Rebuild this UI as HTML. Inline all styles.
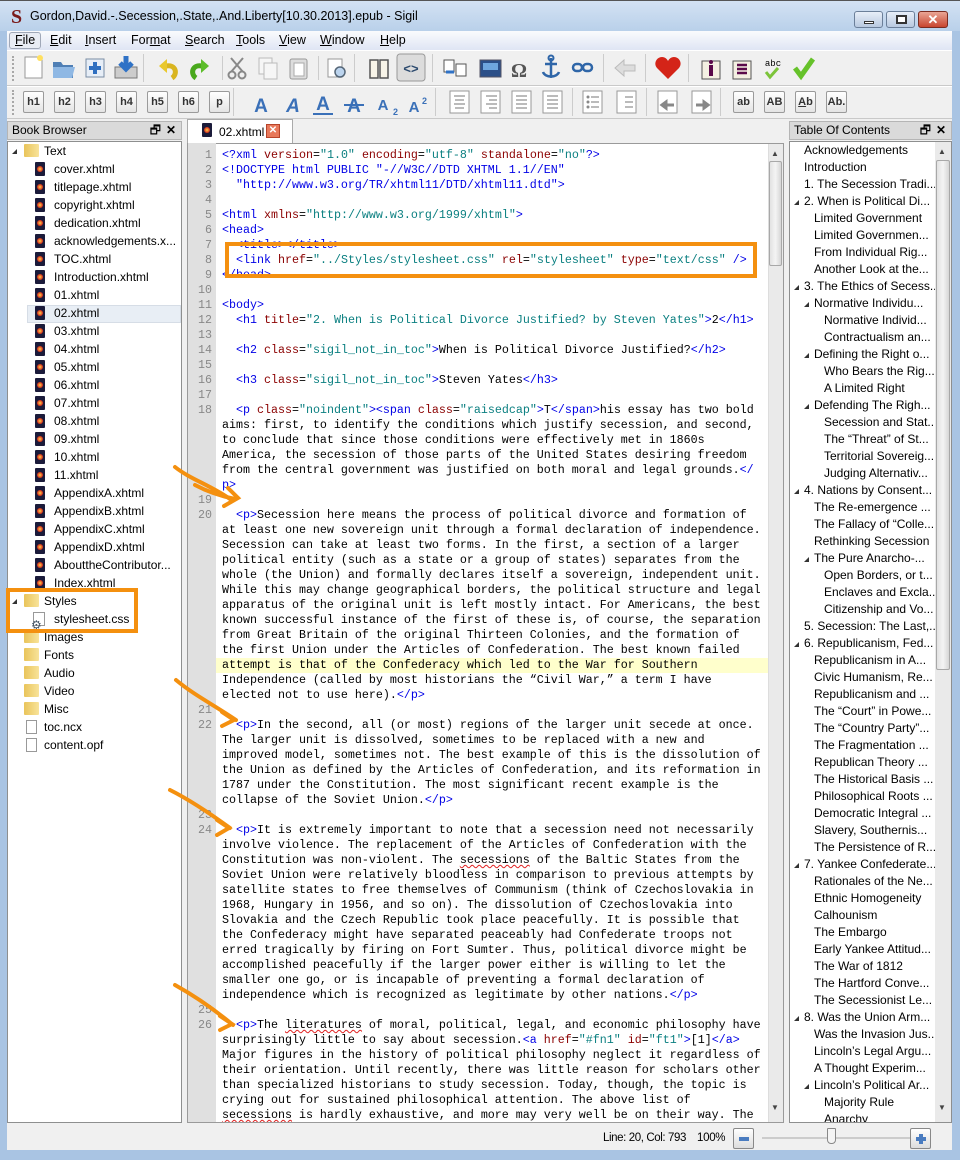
<!DOCTYPE html>
<html><head><meta charset="utf-8">
<style>
*{margin:0;padding:0;box-sizing:border-box}
body{width:960px;height:1160px;overflow:hidden;position:relative;background:#a9c4e3;font-family:"Liberation Sans",sans-serif;font-size:12px;color:#000}
.abs{position:absolute}
#title{left:0;top:0;width:960px;height:31px;background:linear-gradient(#d3e2f3,#b9d0ea);border-top:1px solid #555}
#menu{left:7px;top:31px;width:945px;height:19px;background:linear-gradient(#fafbfd,#dfe5f4)}
#menu span{position:absolute;top:2px;font-size:12.5px}
#tb{left:7px;top:50px;width:945px;height:1100px;background:#f0f0f0}
.tbar{position:absolute;border-top:1px solid #fff;border-bottom:1px solid #c9c9c9}
.hb{position:absolute;width:21px;height:22px;border:1px solid #9a9a9a;background:linear-gradient(#fff,#e4e4e4);font-weight:bold;font-size:11px;text-align:center;line-height:20px;color:#333;border-radius:2px}
.grip{position:absolute;width:2px;border-left:2px dotted #a8a8a8}
.panelhead{position:absolute;height:19px;background:#dadada;border:1px solid #b5b5b5;font-size:12px;line-height:17px;padding-left:4px}
.panel{position:absolute;background:#fff;border:1px solid #8e8f8f}
.tree div{position:absolute;left:0;height:18px;line-height:18px;white-space:nowrap}
.fi{position:absolute;width:10px;height:14px;background:#1b1b3a;border-radius:1px}
.fi:after{content:"";position:absolute;left:2px;top:4px;width:6px;height:6px;border-radius:50%;background:radial-gradient(#ffd24a,#d2281c 70%)}
.fo{position:absolute;width:15px;height:13px;background:linear-gradient(90deg,#e9c45a,#f8e39a);border-radius:1px}
.tri{position:absolute;width:0;height:0;border-left:5px solid transparent;border-bottom:5px solid #333}
#code{left:216px;top:148px;width:552px;height:974px;overflow:hidden;background:#fff}
#gut{left:188px;top:143px;width:28px;height:979px;background:#e0e0e0}
.row{height:15px;line-height:15px;white-space:pre;font-family:"Liberation Mono",monospace;font-size:11.67px;padding-left:6px}
.ln{position:absolute;left:188px;width:24px;text-align:right;font-family:"Liberation Mono",monospace;font-size:11.67px;color:#888;height:15px;line-height:15px}
.t{color:#0000e6}.a{color:#8b0000}.v{color:#0a7f80}
.hl{background:#ffffcc}
.sq{text-decoration:underline wavy #e02020;text-underline-offset:1px;text-decoration-thickness:1px}
.toc div{position:absolute;height:17px;line-height:17px;white-space:nowrap;font-size:12px}
</style></head><body>
<div id="title" class="abs">
 <div class="abs" style="left:11px;top:5px;font-family:'Liberation Serif',serif;font-weight:bold;font-size:20px;color:#7a1b1b">S</div>
 <div class="abs" style="left:30px;top:8px;font-size:12.5px">Gordon,David.-.Secession,.State,.And.Liberty[10.30.2013].epub - Sigil</div>
 <div class="abs" style="left:854px;top:10px;width:29px;height:17px;border:1px solid #6b7f99;border-radius:3px;background:linear-gradient(#e7eef8,#b8c9e0)"><div class="abs" style="left:9px;top:9px;width:10px;height:3px;border:1px solid #333;background:#fff"></div></div>
 <div class="abs" style="left:886px;top:10px;width:29px;height:17px;border:1px solid #6b7f99;border-radius:3px;background:linear-gradient(#e7eef8,#b8c9e0)"><div class="abs" style="left:9px;top:3px;width:11px;height:9px;border:2px solid #333;background:#fff"></div></div>
 <div class="abs" style="left:918px;top:10px;width:30px;height:17px;border:1px solid #7a2b20;border-radius:3px;background:linear-gradient(#e9a595,#c8452f);color:#fff;font-weight:bold;text-align:center;line-height:15px;font-size:13px">✕</div>
</div>
<div id="menu" class="abs">
 <div class="abs" style="left:2px;top:1px;width:32px;height:17px;border:1px solid #a0a8b8;border-radius:3px;background:#e8ecf4"></div>
 <span style="left:8px"><u>F</u>ile</span><span style="left:43px"><u>E</u>dit</span><span style="left:78px"><u>I</u>nsert</span><span style="left:124px">For<u>m</u>at</span><span style="left:178px"><u>S</u>earch</span><span style="left:229px"><u>T</u>ools</span><span style="left:272px"><u>V</u>iew</span><span style="left:313px"><u>W</u>indow</span><span style="left:373px"><u>H</u>elp</span>
</div>
<div id="tb" class="abs"></div>
<div class="tbar" style="left:7px;top:50px;width:945px;height:36px"></div>
<div class="tbar" style="left:7px;top:86px;width:945px;height:33px"></div>
<div class="grip" style="left:12px;top:56px;height:25px"></div>
<div class="grip" style="left:12px;top:90px;height:25px"></div>
<svg class="abs" style="left:0;top:50px" width="960" height="70">
 <rect x="25" y="7" width="17" height="21" fill="#fff" stroke="#999"/><circle cx="40" cy="8" r="3" fill="#ffe060"/>
 <path d="M53 12h8l2 3h10v13H53z" fill="#4f7fb5"/><path d="M53 17h22l-3 11H53z" fill="#8fb8e4"/>
 <rect x="86" y="9" width="18" height="18" fill="#e7eef7" stroke="#7a8da4"/><path d="M95 12v12M89 18h12" stroke="#2f6fc0" stroke-width="4"/>
 <rect x="115" y="17" width="22" height="11" fill="#ccc" stroke="#777"/><path d="M126 6v12M120 13l6 6 6-6" stroke="#2f72c6" stroke-width="5" fill="none"/>
 <rect x="143" y="4" width="1" height="28" fill="#ccc"/>
 <path d="M172 28c6-4 4-14-6-12" stroke="#d9b520" stroke-width="5" fill="none"/><path d="M159 16l8-7v14z" fill="#e9c82c"/>
 <path d="M196 28c-6-4-4-14 6-12" stroke="#49a81c" stroke-width="5" fill="none"/><path d="M209 16l-8-7v14z" fill="#5cbd2a"/>
 <rect x="222" y="6" width="1" height="24" fill="#ccc"/>
 <path d="M231 8l12 14M243 8l-12 14" stroke="#888" stroke-width="2"/><circle cx="232" cy="25" r="3.5" fill="none" stroke="#888" stroke-width="2"/><circle cx="242" cy="25" r="3.5" fill="none" stroke="#888" stroke-width="2"/>
 <rect x="259" y="8" width="13" height="16" fill="#f6f6f6" stroke="#bbb"/><rect x="264" y="13" width="13" height="16" fill="#f6f6f6" stroke="#bbb"/>
 <rect x="290" y="9" width="17" height="20" fill="#ddd" stroke="#999" rx="2"/><rect x="294" y="13" width="10" height="13" fill="#fff" stroke="#aaa"/>
 <rect x="318" y="6" width="1" height="24" fill="#ccc"/>
 <rect x="328" y="9" width="14" height="18" fill="#fff" stroke="#999"/><circle cx="340" cy="22" r="5" fill="#bcd4ee" stroke="#567" stroke-width="1.5"/>
 <rect x="354" y="4" width="1" height="28" fill="#ccc"/>
 <path d="M370 10h8v18h-8zM380 10h8v18h-8z" fill="#f8f4e8" stroke="#555" stroke-width="1.5"/>
 <rect x="397" y="4" width="28" height="27" rx="3" fill="#dcdcdc" stroke="#999"/><text x="411" y="23" text-anchor="middle" font-size="13" font-weight="bold" fill="#2c4a6e" font-family="Liberation Sans">&lt;&gt;</text>
 <rect x="432" y="4" width="1" height="28" fill="#ccc"/>
 <rect x="444" y="10" width="10" height="12" fill="#fff" stroke="#555"/><rect x="456" y="14" width="10" height="12" fill="#fff" stroke="#555"/><path d="M446 22h8" stroke="#2f72c6" stroke-width="3"/>
 <rect x="480" y="10" width="21" height="17" fill="#2b4f88" stroke="#556"/><rect x="483" y="13" width="15" height="7" fill="#6ea6de"/>
 <text x="519" y="27" text-anchor="middle" font-size="20" font-weight="bold" fill="#555" font-family="Liberation Serif">Ω</text>
 <path d="M551 8v20M545 14h12M543 22c2 6 14 6 16 0" stroke="#2f66a8" stroke-width="2.5" fill="none"/><circle cx="551" cy="8" r="2.5" fill="none" stroke="#2f66a8" stroke-width="2"/>
 <rect x="573" y="14" width="9" height="7" rx="3.5" fill="none" stroke="#2f66a8" stroke-width="2.5"/><rect x="583" y="14" width="9" height="7" rx="3.5" fill="none" stroke="#2f66a8" stroke-width="2.5"/>
 <rect x="603" y="4" width="1" height="28" fill="#ccc"/>
 <path d="M615 18l9-8v5h11v6h-11v5z" fill="#ddd" stroke="#bbb"/>
 <rect x="645" y="4" width="1" height="28" fill="#ccc"/>
 <path d="M668 29l-11-11c-4-5 0-11 5-11 3 0 5 2 6 4 1-2 3-4 6-4 5 0 9 6 5 11z" fill="#d42418"/>
 <rect x="688" y="4" width="1" height="28" fill="#ccc"/>
 <rect x="702" y="11" width="18" height="18" fill="#f4f0e2" stroke="#555"/><rect x="709" y="15" width="4" height="11" fill="#5a0a4a"/><circle cx="711" cy="12" r="2" fill="#5a0a4a"/>
 <rect x="733" y="11" width="18" height="18" fill="#f4f0e2" stroke="#555"/><path d="M737 15h10M737 19h10M737 23h10" stroke="#5a0a4a" stroke-width="2.5"/>
 <text x="773" y="16" text-anchor="middle" font-size="9" font-family="Liberation Mono">abc</text><path d="M766 22l4 5 8-9" stroke="#7cc43a" stroke-width="3" fill="none"/>
 <path d="M795 18l6 8 12-17" stroke="#66c22a" stroke-width="5" fill="none"/>
 <rect x="233" y="38" width="1" height="28" fill="#ccc"/>
 <g font-family="Liberation Sans" font-weight="bold" font-size="19" fill="#3a70b8" text-anchor="middle">
  <text x="261" y="62">A</text><text x="293" y="62" font-style="italic">A</text><text x="323" y="60">A</text><text x="354" y="62">A</text><text x="383" y="60" font-size="15">A</text><text x="414" y="62" font-size="15">A</text>
 </g>
 <path d="M313 64h20M344 55h20" stroke="#3a70b8" stroke-width="2"/>
 <text x="393" y="65" font-size="9" fill="#3a70b8" font-weight="bold" font-family="Liberation Sans">2</text><text x="422" y="54" font-size="9" fill="#3a70b8" font-weight="bold" font-family="Liberation Sans">2</text>
 <rect x="435" y="38" width="1" height="28" fill="#ccc"/>
 <g fill="#fff" stroke="#999"><rect x="450" y="41" width="19" height="22"/><rect x="481" y="41" width="19" height="22"/><rect x="512" y="41" width="19" height="22"/><rect x="543" y="41" width="19" height="22"/><rect x="583" y="41" width="19" height="22"/><rect x="617" y="41" width="19" height="22"/><rect x="658" y="41" width="19" height="22"/><rect x="692" y="41" width="19" height="22"/></g>
 <g stroke="#777"><path d="M454 46h11M455 50h9M454 54h11M455 58h9M486 46h11M489 50h8M486 54h11M489 58h8M516 46h11M516 50h11M516 54h11M516 58h11M547 46h11M547 50h11M547 54h11M547 58h11M591 47h8M591 52h8M591 57h8M625 47h8M625 52h8M625 57h8"/></g>
 <g fill="#888"><circle cx="588" cy="47" r="1.5"/><circle cx="588" cy="52" r="1.5"/><circle cx="588" cy="57" r="1.5"/></g>
 <path d="M662 55h12M662 55l4-3v6z" stroke="#888" stroke-width="3"/><path d="M696 55h12M708 55l-4-3v6z" stroke="#888" stroke-width="3"/>
 <rect x="572" y="38" width="1" height="28" fill="#ccc"/><rect x="646" y="38" width="1" height="28" fill="#ccc"/><rect x="720" y="38" width="1" height="28" fill="#ccc"/>
</svg>
<div class="hb" style="left:23px;top:91px">h1</div><div class="hb" style="left:54px;top:91px">h2</div><div class="hb" style="left:85px;top:91px">h3</div><div class="hb" style="left:116px;top:91px">h4</div><div class="hb" style="left:147px;top:91px">h5</div><div class="hb" style="left:178px;top:91px">h6</div><div class="hb" style="left:209px;top:91px">p</div>
<div class="hb" style="left:733px;top:91px">ab</div><div class="hb" style="left:764px;top:91px">AB</div><div class="hb" style="left:795px;top:91px"><u>A</u>b</div><div class="hb" style="left:826px;top:91px">Ab.</div>

<div class="panelhead" style="left:7px;top:121px;width:175px">Book Browser<span style="position:absolute;right:20px;top:0">🗗</span><span style="position:absolute;right:5px;top:0;font-weight:bold">✕</span></div>
<div class="panel tree" style="left:7px;top:141px;width:175px;height:982px">
 <div class="abs" style="left:19px;top:163px;width:154px;height:18px;background:#e8eef5;border:1px solid #d6dde6"></div>
</div>
<div class="abs tree" style="left:0;top:0;width:190px;height:1130px">
 <div style="top:142px"><span class="tri" style="left:12px;top:7px"></span><span class="fo" style="left:24px;top:2px"></span><span style="position:absolute;left:44px">Text</span></div>
</div>
<div id="files" class="abs" style="left:0;top:0"></div>

<div class="abs" style="left:187px;top:119px;width:106px;height:25px;background:#fff;border:1px solid #aaa;border-bottom:none"></div>
<div class="fi" style="left:202px;top:123px"></div>
<div class="abs" style="left:219px;top:125px;font-size:12px">02.xhtml</div>
<div class="abs" style="left:266px;top:124px;width:14px;height:14px;background:#e8785a;border:1px solid #b8442a;color:#fff;font-size:10px;text-align:center;line-height:12px;font-weight:bold">✕</div>
<div class="abs" style="left:187px;top:143px;width:597px;height:980px;border:1px solid #9a9a9a;background:#fff"></div>
<div id="gut" class="abs"></div>
<div id="code" class="abs">
<div class="row"><span class="t">&lt;?xml</span> <span class="a">version</span>=<span class="v">"1.0"</span> <span class="a">encoding</span>=<span class="v">"utf-8"</span> <span class="a">standalone</span>=<span class="v">"no"</span><span class="t">?&gt;</span></div>
<div class="row"><span class="t">&lt;!DOCTYPE html PUBLIC "-//W3C//DTD XHTML 1.1//EN"</span></div>
<div class="row"><span class="t">  "http://www.w3.org/TR/xhtml11/DTD/xhtml11.dtd"&gt;</span></div>
<div class="row"> </div>
<div class="row"><span class="t">&lt;html</span> <span class="a">xmlns</span>=<span class="v">"http://www.w3.org/1999/xhtml"</span><span class="t">&gt;</span></div>
<div class="row"><span class="t">&lt;head&gt;</span></div>
<div class="row"><span class="t">  &lt;title&gt;&lt;/title&gt;</span></div>
<div class="row">  <span class="t">&lt;link</span> <span class="a">href</span>=<span class="v">"../Styles/stylesheet.css"</span> <span class="a">rel</span>=<span class="v">"stylesheet"</span> <span class="a">type</span>=<span class="v">"text/css"</span> <span class="t">/&gt;</span></div>
<div class="row"><span class="t">&lt;/head&gt;</span></div>
<div class="row"> </div>
<div class="row"><span class="t">&lt;body&gt;</span></div>
<div class="row">  <span class="t">&lt;h1</span> <span class="a">title</span>=<span class="v">"2. When is Political Divorce Justified? by Steven Yates"</span><span class="t">&gt;</span>2<span class="t">&lt;/h1&gt;</span></div>
<div class="row"> </div>
<div class="row">  <span class="t">&lt;h2</span> <span class="a">class</span>=<span class="v">"sigil_not_in_toc"</span><span class="t">&gt;</span>When is Political Divorce Justified?<span class="t">&lt;/h2&gt;</span></div>
<div class="row"> </div>
<div class="row">  <span class="t">&lt;h3</span> <span class="a">class</span>=<span class="v">"sigil_not_in_toc"</span><span class="t">&gt;</span>Steven Yates<span class="t">&lt;/h3&gt;</span></div>
<div class="row"> </div>
<div class="row">  <span class="t">&lt;p</span> <span class="a">class</span>=<span class="v">"noindent"</span><span class="t">&gt;&lt;span</span> <span class="a">class</span>=<span class="v">"raisedcap"</span><span class="t">&gt;</span>T<span class="t">&lt;/span&gt;</span>his essay has two bold</div>
<div class="row">aims: first, to identify the conditions which justify secession, and second,</div>
<div class="row">to conclude that since those conditions were effectively met in 1860s</div>
<div class="row">America, the secession of those parts of the United States desiring freedom</div>
<div class="row">from the central government was justified on both moral and legal grounds.<span class="t">&lt;/</span></div>
<div class="row"><span class="t">p&gt;</span></div>
<div class="row"> </div>
<div class="row">  <span class="t">&lt;p&gt;</span>Secession here means the process of political divorce and formation of</div>
<div class="row">at least one new sovereign unit through a formal declaration of independence.</div>
<div class="row">Secession can take at least two forms. In the first, a section of a larger</div>
<div class="row">political entity (such as a state or a group of states) separates from the</div>
<div class="row">whole (the Union) and formally declares itself a sovereign, independent unit.</div>
<div class="row">While this may change geographical borders, the political structure and legal</div>
<div class="row">apparatus of the original unit is left mostly intact. For Americans, the best</div>
<div class="row">known successful instance of the first of these is, of course, the separation</div>
<div class="row">from Great Britain of the original Thirteen Colonies, and the formation of</div>
<div class="row">the first Union under the Articles of Confederation. The best known failed</div>
<div class="row hl">attempt is that of the Confederacy which led to the War for Southern</div>
<div class="row">Independence (called by most historians the “Civil War,” a term I have</div>
<div class="row">elected not to use here).<span class="t">&lt;/p&gt;</span></div>
<div class="row"> </div>
<div class="row">  <span class="t">&lt;p&gt;</span>In the second, all (or most) regions of the larger unit secede at once.</div>
<div class="row">The larger unit is dissolved, sometimes to be replaced with a new and</div>
<div class="row">improved model, sometimes not. The best example of this is the dissolution of</div>
<div class="row">the Union as defined by the Articles of Confederation, and its reformation in</div>
<div class="row">1787 under the Constitution. The most significant recent example is the</div>
<div class="row">collapse of the Soviet Union.<span class="t">&lt;/p&gt;</span></div>
<div class="row"> </div>
<div class="row">  <span class="t">&lt;p&gt;</span>It is extremely important to note that a secession need not necessarily</div>
<div class="row">involve violence. The replacement of the Articles of Confederation with the</div>
<div class="row">Constitution was non-violent. The <span class="sq">secessions</span> of the Baltic States from the</div>
<div class="row">Soviet Union were relatively bloodless in comparison to previous attempts by</div>
<div class="row">satellite states to free themselves of Communism (think of Czechoslovakia in</div>
<div class="row">1968, Hungary in 1956, and so on). The dissolution of Czechoslovakia into</div>
<div class="row">Slovakia and the Czech Republic took place peacefully. It is possible that</div>
<div class="row">the Confederacy might have separated peaceably had Confederate troops not</div>
<div class="row">erred tragically by firing on Fort Sumter. Thus, political divorce might be</div>
<div class="row">accomplished peacefully if the larger power either is willing to let the</div>
<div class="row">smaller one go, or is incapable of preventing a formal declaration of</div>
<div class="row">independence which is recognized as legitimate by other nations.<span class="t">&lt;/p&gt;</span></div>
<div class="row"> </div>
<div class="row">  <span class="t">&lt;p&gt;</span>The <span class="sq">literatures</span> of moral, political, legal, and economic philosophy have</div>
<div class="row">surprisingly little to say about secession.<span class="t">&lt;a</span> <span class="a">href</span>=<span class="v">"#fn1"</span> <span class="a">id</span>=<span class="v">"ft1"</span><span class="t">&gt;</span>[1]<span class="t">&lt;/a&gt;</span></div>
<div class="row">Major figures in the history of political philosophy neglect it regardless of</div>
<div class="row">their orientation. Until recently, there was little reason for scholars other</div>
<div class="row">than specialized historians to study secession. Today, though, the topic is</div>
<div class="row">crying out for sustained philosophical attention. The above list of</div>
<div class="row"><span class="sq">secessions</span> is hardly exhaustive, and more may very well be on their way. The</div>
</div>
<div id="lns"></div>
<div class="abs" style="left:768px;top:144px;width:15px;height:978px;background:#eaeaea;border-left:1px solid #ddd"></div>
<div class="abs" style="left:769px;top:161px;width:13px;height:105px;background:linear-gradient(90deg,#e2e2e2,#f4f4f4,#d6d6d6);border:1px solid #a8a8a8;border-radius:2px"></div>
<div class="abs" style="left:771px;top:149px;font-size:8px;color:#444">▲</div>
<div class="abs" style="left:771px;top:1103px;font-size:8px;color:#444">▼</div>

<div class="panelhead" style="left:789px;top:121px;width:163px">Table Of Contents<span style="position:absolute;right:20px;top:0">🗗</span><span style="position:absolute;right:5px;top:0;font-weight:bold">✕</span></div>
<div class="panel" style="left:789px;top:141px;width:163px;height:982px"></div>
<div class="abs" style="left:935px;top:142px;width:16px;height:980px;background:#eaeaea"></div>
<div class="abs" style="left:936px;top:160px;width:14px;height:510px;background:linear-gradient(90deg,#e2e2e2,#f4f4f4,#d6d6d6);border:1px solid #a8a8a8;border-radius:2px"></div>
<div class="abs" style="left:938px;top:147px;font-size:8px;color:#444">▲</div>
<div class="abs" style="left:938px;top:1103px;font-size:8px;color:#444">▼</div>
<div id="toc" class="abs toc" style="left:0;top:0;width:935px;height:1122px;overflow:hidden"></div>

<div class="abs" style="left:603px;top:1132px;font-size:11.5px;letter-spacing:-0.4px;white-space:nowrap">Line: 20, Col: 793</div>
<div class="abs" style="left:697px;top:1132px;font-size:11.5px;letter-spacing:-0.3px">100%</div>
<div class="abs" style="left:733px;top:1128px;width:21px;height:21px;border:1px solid #888;border-radius:2px;background:linear-gradient(#fff,#ddd)"><div class="abs" style="left:5px;top:8px;width:10px;height:4px;background:#4a7cc0"></div></div>
<div class="abs" style="left:762px;top:1137px;width:150px;height:2px;background:#ccc"></div>
<div class="abs" style="left:827px;top:1128px;width:9px;height:16px;background:#f4f4f4;border:1px solid #888;border-radius:1px 1px 4px 4px"></div>
<div class="abs" style="left:910px;top:1128px;width:21px;height:21px;border:1px solid #888;border-radius:2px;background:linear-gradient(#fff,#ddd)"><div class="abs" style="left:5px;top:8px;width:10px;height:4px;background:#4a7cc0"></div><div class="abs" style="left:8px;top:5px;width:4px;height:10px;background:#4a7cc0"></div></div>

<svg class="abs" style="left:0;top:0" width="960" height="1160">
 <g fill="none" stroke="#f4900f" stroke-width="4" stroke-linecap="round">
  <rect x="227" y="244" width="528" height="32"/>
  <rect x="8" y="590" width="128" height="41"/>
  <path d="M175 467c15 12 35 18 55 32M195 485c15 8 30 12 40 14M228 488l10 10-14 8"/>
  <path d="M176 680c18 15 38 25 60 40M222 712l12 8-12 6"/>
  <path d="M170 790c20 10 38 22 60 38M217 820l12 8-12 7"/>
  <path d="M175 985c18 10 40 25 58 40M220 1016l12 8-12 6"/>
 </g>
</svg>

<script>
var files=["cover.xhtml","titlepage.xhtml","copyright.xhtml","dedication.xhtml","acknowledgements.x...","TOC.xhtml","Introduction.xhtml","01.xhtml","02.xhtml","03.xhtml","04.xhtml","05.xhtml","06.xhtml","07.xhtml","08.xhtml","09.xhtml","10.xhtml","11.xhtml","AppendixA.xhtml","AppendixB.xhtml","AppendixC.xhtml","AppendixD.xhtml","AbouttheContributor...","Index.xhtml"];
var h="";
files.forEach(function(f,i){var y=160+i*18;h+='<span class="fi" style="left:35px;top:'+(y+2)+'px"></span><span class="abs" style="left:54px;top:'+y+'px;line-height:18px;white-space:nowrap">'+f+'</span>';});
var y=592;
h+='<span class="tri abs" style="left:12px;top:'+(y+7)+'px"></span><span class="fo" style="left:24px;top:'+(y+2)+'px"></span><span class="abs" style="left:44px;top:'+y+'px;line-height:18px">Styles</span>';
h+='<span class="abs" style="left:33px;top:612px;width:12px;height:14px;background:#fff;border:1px solid #999"></span><span class="abs" style="left:31px;top:618px;color:#456;font-size:12px">⚙</span><span class="abs" style="left:54px;top:610px;line-height:18px">stylesheet.css</span>';
["Images","Fonts","Audio","Video","Misc"].forEach(function(f,i){var y=628+i*18;h+='<span class="fo" style="left:24px;top:'+(y+2)+'px"></span><span class="abs" style="left:44px;top:'+y+'px;line-height:18px">'+f+'</span>';});
["toc.ncx","content.opf"].forEach(function(f,i){var y=718+i*18;h+='<span class="abs" style="left:26px;top:'+(y+2)+'px;width:11px;height:14px;background:#fff;border:1px solid #999"></span><span class="abs" style="left:44px;top:'+y+'px;line-height:18px">'+f+'</span>';});
document.getElementById('files').innerHTML=h;
var ln="",nums=[];for(var i=1;i<=18;i++)nums.push([i,i-1]);
nums.push([19,23],[20,24],[21,37],[22,38],[23,44],[24,45],[25,57],[26,58]);
nums.forEach(function(n){ln+='<div class="ln" style="top:'+(148+n[1]*15)+'px">'+n[0]+'</div>';});
document.getElementById('lns').innerHTML=ln;
var toc=[[0,0,"Acknowledgements"],[0,0,"Introduction"],[0,0,"1. The Secession Tradi..."],[0,1,"2. When is Political Di..."],[1,0,"Limited Government"],[1,0,"Limited Governmen..."],[1,0,"From Individual Rig..."],[1,0,"Another Look at the..."],[0,1,"3. The Ethics of Secess..."],[1,1,"Normative Individu..."],[2,0,"Normative Individ..."],[2,0,"Contractualism an..."],[1,1,"Defining the Right o..."],[2,0,"Who Bears the Rig..."],[2,0,"A Limited Right"],[1,1,"Defending The Righ..."],[2,0,"Secession and Stat..."],[2,0,"The “Threat” of St..."],[2,0,"Territorial Sovereig..."],[2,0,"Judging Alternativ..."],[0,1,"4. Nations by Consent..."],[1,0,"The Re-emergence ..."],[1,0,"The Fallacy of “Colle..."],[1,0,"Rethinking Secession"],[1,1,"The Pure Anarcho-..."],[2,0,"Open Borders, or t..."],[2,0,"Enclaves and Excla..."],[2,0,"Citizenship and Vo..."],[0,0,"5. Secession: The Last,..."],[0,1,"6. Republicanism, Fed..."],[1,0,"Republicanism in A..."],[1,0,"Civic Humanism, Re..."],[1,0,"Republicanism and ..."],[1,0,"The “Court” in Powe..."],[1,0,"The “Country Party”..."],[1,0,"The Fragmentation ..."],[1,0,"Republican Theory ..."],[1,0,"The Historical Basis ..."],[1,0,"Philosophical Roots ..."],[1,0,"Democratic Integral ..."],[1,0,"Slavery, Southernis..."],[1,0,"The Persistence of R..."],[0,1,"7. Yankee Confederate..."],[1,0,"Rationales of the Ne..."],[1,0,"Ethnic Homogeneity"],[1,0,"Calhounism"],[1,0,"The Embargo"],[1,0,"Early Yankee Attitud..."],[1,0,"The War of 1812"],[1,0,"The Hartford Conve..."],[1,0,"The Secessionist Le..."],[0,1,"8. Was the Union Arm..."],[1,0,"Was the Invasion Jus..."],[1,0,"Lincoln’s Legal Argu..."],[1,0,"A Thought Experim..."],[1,1,"Lincoln’s Political Ar..."],[2,0,"Majority Rule"],[2,0,"Anarchy"]];
var t="";toc.forEach(function(e,i){var y=142+i*17,x=804+e[0]*10;if(e[1])t+='<span class="tri abs" style="left:'+(x-10)+'px;top:'+(y+7)+'px"></span>';t+='<div style="left:'+x+'px;top:'+y+'px">'+e[2]+'</div>';});
document.getElementById('toc').innerHTML=t;
</script>
</body></html>
